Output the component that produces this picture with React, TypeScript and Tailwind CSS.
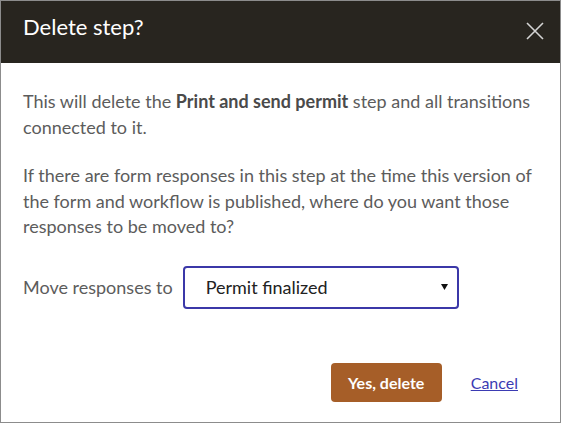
export default function App() {
  return (
    <div className="w-[561px] h-[423px] bg-white border border-[#8c8c8c] flex flex-col font-['Lato','Open_Sans',sans-serif]">
      {/* Header */}
      <div className="h-[62px] shrink-0 bg-[#28251f] flex items-start justify-between pl-[22px] pr-[16px] pt-[13px]">
        <h2 className="text-[22px] leading-[1.2] text-white">Delete step?</h2>
        <button aria-label="Close" className="mt-[8px] w-[18px] h-[18px] text-[#d4d4d4]">
          <svg viewBox="0 0 18 18" width="18" height="18" fill="none" stroke="currentColor" strokeWidth="1.6">
            <path d="M1 1L17 17M17 1L1 17" />
          </svg>
        </button>
      </div>

      {/* Body */}
      <div className="flex-1 flex flex-col px-[22px] pt-[26px] pb-[20px] text-[18px] leading-[25.6px] text-[#5c5c5c]">
        <p>
          This will delete the <strong className="font-bold text-[#4a4a4a]">Print and send permit</strong> step and all transitions connected to it.
        </p>
        <p className="mt-[23px]">
          If there are form responses in this step at the time this version of the form and workflow is published, where do you want those responses to be moved to?
        </p>

        <div className="mt-[26px] flex items-center gap-[10px]">
          <label className="whitespace-nowrap">Move responses to</label>
          <div className="relative w-[276px] h-[43px] border-2 border-[#3b38a8] rounded-[4px] flex items-center pl-[21px] pr-[10px]">
            <span className="text-[#222222]">Permit finalized</span>
            <svg className="absolute right-[9px] top-[16px]" width="7" height="6" viewBox="0 0 7 6" fill="#111111">
              <path d="M0 0H7L3.5 6Z" />
            </svg>
          </div>
        </div>

        <div className="mt-auto flex items-center justify-end gap-[29px] pr-[20px] text-[16px]">
          <button className="h-[39px] w-[111px] rounded-[4px] bg-[#a65e28] text-white font-bold">
            Yes, delete
          </button>
          <a href="#" className="text-[#3b3bb3] underline">Cancel</a>
        </div>
      </div>
    </div>
  );
}
